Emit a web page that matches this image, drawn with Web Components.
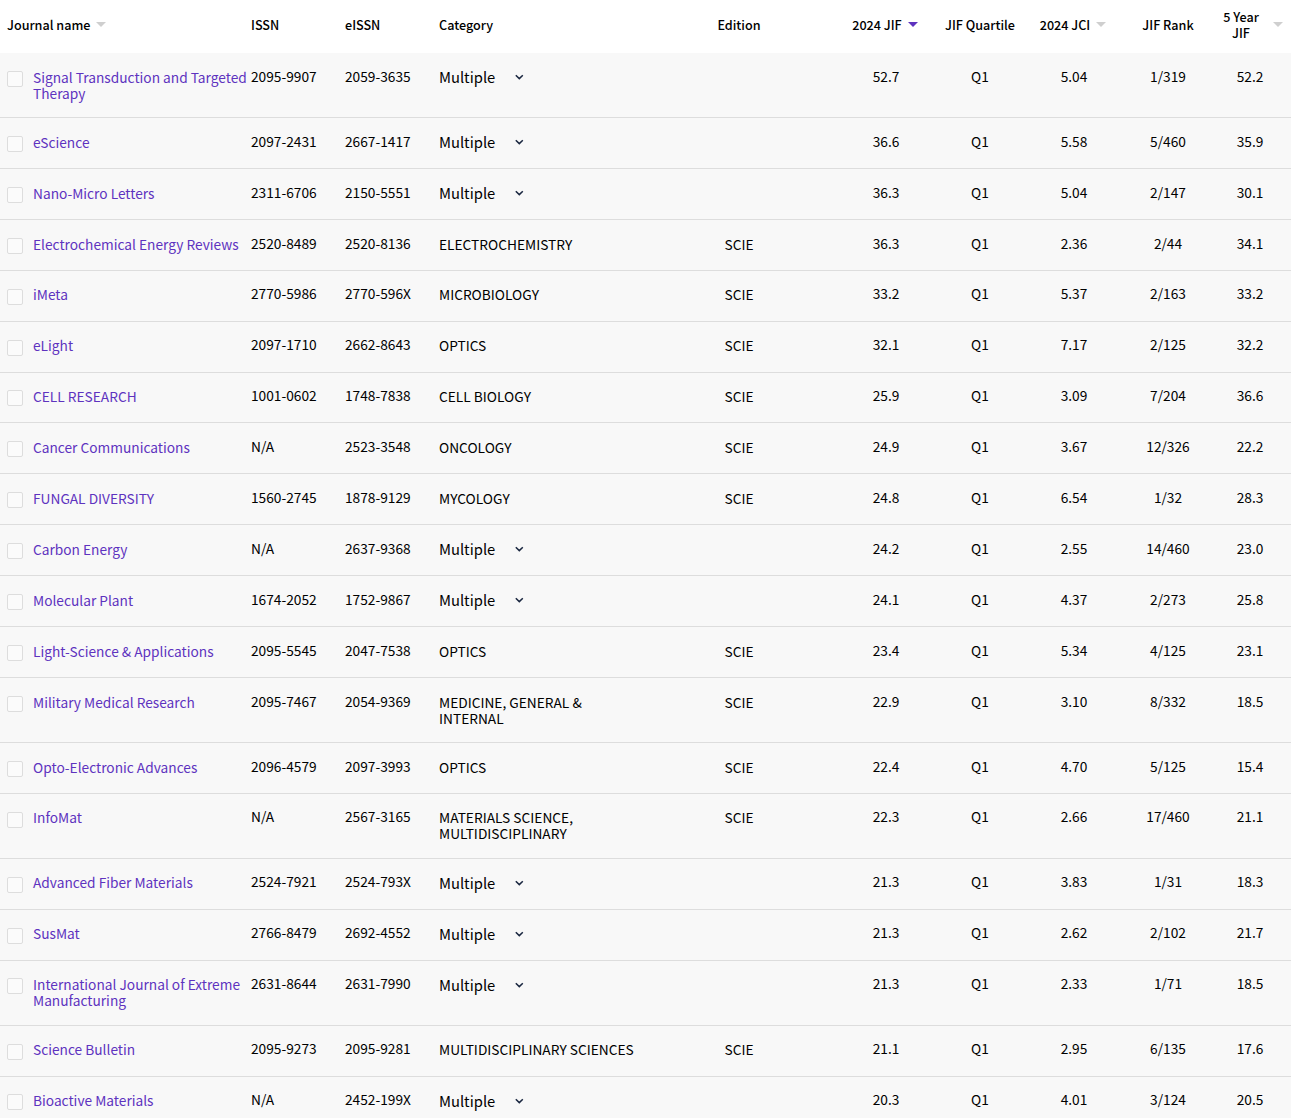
<!DOCTYPE html>
<html><head><meta charset="utf-8"><title>Journals</title>
<style>
html,body{margin:0;padding:0;background:#fff}
body{font-family:"Noto Sans CJK JP","Noto Sans",sans-serif;color:#000;overflow:hidden;height:1118px}
</style></head><body>
<jcr-table id="t"></jcr-table>
<script>
const GRID='251px 94px 94px 253px 94px 53px 94px 94px 94px 94px 76px';
class SortArrow extends HTMLElement{constructor(){super();this.attachShadow({mode:'open'}).innerHTML=`<style>:host{display:inline-block;width:10px;height:5px;flex:none}svg{display:block}</style><svg width="10" height="5" viewBox="0 0 10 5"><path d="M0 0H10L5 5Z" fill="${this.hasAttribute('active')?'#5e33bf':'#cfcfcf'}"/></svg>`}}
class ChevronIcon extends HTMLElement{constructor(){super();this.attachShadow({mode:'open'}).innerHTML=`<style>:host{display:inline-block;width:9px;height:6px;flex:none}svg{display:block}</style><svg width="9" height="6" viewBox="0 0 9 6"><path d="M0.8 1.2L4.3 4.6L7.8 1.2" fill="none" stroke="#1a2740" stroke-width="1.5"/></svg>`}}
class RowCheck extends HTMLElement{constructor(){super();this.attachShadow({mode:'open'}).innerHTML=`<style>:host{display:block;width:14px;height:14px;border:1px solid #ddd;border-radius:2px;background:#fbfbfb;flex:none}</style>`}}
class HeadCell extends HTMLElement{constructor(){super();const a=this.getAttribute('sort');this.attachShadow({mode:'open'}).innerHTML=`<style>:host{display:flex;align-items:center;box-sizing:border-box;font-size:12.6px;line-height:16px;font-weight:500;height:53px;padding-bottom:4px}
:host([center]){justify-content:center;text-align:center}
:host([gap][center]){padding-right:2px}
.t{display:block}:host([gap]) .t{margin-right:6px}</style><span class="t"><slot></slot></span>${a?`<sort-arrow ${a==='active'?'active':''}></sort-arrow>`:''}`}}
class JcrHeader extends HTMLElement{constructor(){super();this.attachShadow({mode:'open'}).innerHTML=`<style>:host{display:grid;grid-template-columns:${GRID};height:53px;background:#fff}</style><slot></slot>`}}
class JcrRow extends HTMLElement{constructor(){super();const g=n=>this.getAttribute(n)||'';const cat=g('cat');const multi=cat==='Multiple';
this.attachShadow({mode:'open'}).innerHTML=`<style>
:host{display:grid;grid-template-columns:${GRID};box-sizing:border-box;background:#f8f8f8;border-bottom:1px solid #ddd;font-size:13.72px;line-height:16px;height:var(--row-h,50.91px);padding-top:14.72px}
.name{display:flex;gap:10px;padding-left:7px;color:#5e33bf;padding-top:1px}
.name row-check{margin-top:2.18px}
.c{text-align:center}
.cat{padding-top:1px;max-width:200px}
.ed{padding-top:1px;text-align:center}
.m{display:flex;align-items:center;font-size:14.75px;height:16px;padding-top:1.3px}
.m span{width:75.5px}
</style>
<div class="name"><row-check></row-check><span><slot></slot></span></div>
<div>${g('issn')}</div><div>${g('eissn')}</div>
${multi?`<div class="m"><span>Multiple</span><chevron-icon></chevron-icon></div>`:`<div class="cat">${cat}</div>`}
<div class="ed">${g('ed')}</div><div></div>
<div class="c">${g('jif')}</div><div class="c">Q1</div><div class="c">${g('jci')}</div><div class="c">${g('rank')}</div>
<div class="c" style="padding-right:6px">${g('y5')}</div>`}}
class JcrTable extends HTMLElement{constructor(){super();this.attachShadow({mode:'open'}).innerHTML=`<style>:host{display:block;width:1291px}</style><slot></slot>`}}
customElements.define('sort-arrow',SortArrow);customElements.define('chevron-icon',ChevronIcon);customElements.define('row-check',RowCheck);customElements.define('head-cell',HeadCell);customElements.define('jcr-header',JcrHeader);customElements.define('jcr-row',JcrRow);customElements.define('jcr-table',JcrTable);
const D=[
['Signal Transduction and Targeted Therapy','2095-9907','2059-3635','Multiple','','52.7','5.04','1/319','52.2',65],
['eScience','2097-2431','2667-1417','Multiple','','36.6','5.58','5/460','35.9'],
['Nano-Micro Letters','2311-6706','2150-5551','Multiple','','36.3','5.04','2/147','30.1'],
['Electrochemical Energy Reviews','2520-8489','2520-8136','ELECTROCHEMISTRY','SCIE','36.3','2.36','2/44','34.1'],
['iMeta','2770-5986','2770-596X','MICROBIOLOGY','SCIE','33.2','5.37','2/163','33.2'],
['eLight','2097-1710','2662-8643','OPTICS','SCIE','32.1','7.17','2/125','32.2'],
['CELL RESEARCH','1001-0602','1748-7838','CELL BIOLOGY','SCIE','25.9','3.09','7/204','36.6'],
['Cancer Communications','N/A','2523-3548','ONCOLOGY','SCIE','24.9','3.67','12/326','22.2'],
['FUNGAL DIVERSITY','1560-2745','1878-9129','MYCOLOGY','SCIE','24.8','6.54','1/32','28.3'],
['Carbon Energy','N/A','2637-9368','Multiple','','24.2','2.55','14/460','23.0'],
['Molecular Plant','1674-2052','1752-9867','Multiple','','24.1','4.37','2/273','25.8'],
['Light-Science & Applications','2095-5545','2047-7538','OPTICS','SCIE','23.4','5.34','4/125','23.1'],
['Military Medical Research','2095-7467','2054-9369','MEDICINE, GENERAL & INTERNAL','SCIE','22.9','3.10','8/332','18.5',64.89],
['Opto-Electronic Advances','2096-4579','2097-3993','OPTICS','SCIE','22.4','4.70','5/125','15.4'],
['InfoMat','N/A','2567-3165','MATERIALS SCIENCE, MULTIDISCIPLINARY','SCIE','22.3','2.66','17/460','21.1',65],
['Advanced Fiber Materials','2524-7921','2524-793X','Multiple','','21.3','3.83','1/31','18.3'],
['SusMat','2766-8479','2692-4552','Multiple','','21.3','2.62','2/102','21.7'],
['International Journal of Extreme Manufacturing','2631-8644','2631-7990','Multiple','','21.3','2.33','1/71','18.5',65.1],
['Science Bulletin','2095-9273','2095-9281','MULTIDISCIPLINARY SCIENCES','SCIE','21.1','2.95','6/135','17.6'],
['Bioactive Materials','N/A','2452-199X','Multiple','','20.3','4.01','3/124','20.5']];
const esc=s=>s.replace(/&/g,'&amp;');
let h=`<jcr-header>
<head-cell sort="idle" gap style="padding-left:7px">Journal name</head-cell><head-cell>ISSN</head-cell><head-cell>eISSN</head-cell><head-cell>Category</head-cell><head-cell center>Edition</head-cell><div></div>
<head-cell center gap sort="active">2024 JIF</head-cell><head-cell center>JIF Quartile</head-cell><head-cell center gap sort="idle">2024 JCI</head-cell><head-cell center>JIF Rank</head-cell><head-cell center sort="idle" style="padding-left:4px;justify-content:flex-start"><span style="display:block;width:44px;margin-right:10px">5 Year JIF</span></head-cell></jcr-header>`;
for(const r of D){h+=`<jcr-row ${r[9]?`style="--row-h:${r[9]}px"`:''} issn="${r[1]}" eissn="${r[2]}" cat="${esc(r[3])}" ed="${r[4]}" jif="${r[5]}" jci="${r[6]}" rank="${r[7]}" y5="${r[8]}">${esc(r[0])}</jcr-row>`}
document.getElementById('t').innerHTML=h;
</script></body></html>
